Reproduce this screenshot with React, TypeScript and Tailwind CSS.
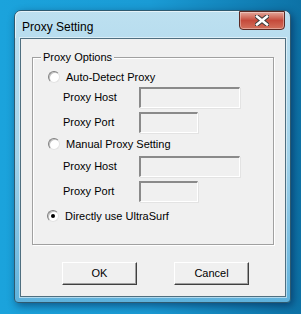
const font = { fontFamily: '"Liberation Sans", Arial, sans-serif' };

function Radio({ checked }: { checked?: boolean }) {
  return (
    <span className="relative inline-flex w-[12px] h-[12px] shrink-0 rounded-full bg-white border border-t-[#808080] border-l-[#808080] border-r-[#e3e3e3] border-b-[#e3e3e3] shadow-[inset_1px_1px_0_#c0c0c0] items-center justify-center">
      {checked && <span className="w-[4px] h-[4px] rounded-full bg-black" />}
    </span>
  );
}

function Field({ width }: { width: string }) {
  return (
    <div
      className={`${width} h-[21px] bg-[#f0f0f0] border-t-2 border-l-2 border-t-[#8a8a8a] border-l-[#8a8a8a] border-r border-b border-r-[#ffffff] border-b-[#ffffff] shadow-[1px_1px_0_#e3e3e3]`}
    />
  );
}

function FieldRow({ label, width, mt }: { label: string; width: string; mt: string }) {
  return (
    <div className={`flex items-center h-[21px] ${mt}`}>
      <span className="w-[76px] pl-[30px] box-content text-[11px] text-black leading-none">{label}</span>
      <Field width={width} />
    </div>
  );
}

function RadioRow({ label, checked, mt, ml }: { label: string; checked?: boolean; mt: string; ml: string }) {
  return (
    <div className={`flex items-center h-[18px] ${mt} ${ml}`}>
      <Radio checked={checked} />
      <span className="ml-[6px] text-[11px] text-black leading-none">{label}</span>
    </div>
  );
}

function Button({ label }: { label: string }) {
  return (
    <button className="w-[75px] h-[23px] bg-[#f0f0f0] border border-t-white border-l-white border-r-[#404040] border-b-[#404040] shadow-[inset_-1px_-1px_0_#a0a0a0] text-[11px] text-black leading-none">
      {label}
    </button>
  );
}

export default function App() {
  return (
    <div
      className="w-[301px] h-[314px] overflow-hidden bg-gradient-to-r from-[#1ba3dc] via-[#1a9bd5] to-[#0d72a6] pt-[10px] pl-[14px]"
      style={font}
    >
      <div className="w-[277px] h-[293px] rounded-t-[7px] rounded-b-[4px] border border-[#2e5a70] bg-gradient-to-b from-[#bde0f0] via-[#a2d2e9] to-[#5fb2dc] shadow-[2px_3px_8px_rgba(0,0,40,0.45)] flex flex-col">
        <div className="relative h-[27px] shrink-0 rounded-t-[6px] border-t border-l border-white/60 flex items-center pl-[6px]">
          <span className="text-[12px] text-black mt-[3px]">Proxy Setting</span>
          <div className="absolute right-[5px] -top-px w-[46px] h-[19px] rounded-b-[4px] border border-[#5a2a24] bg-gradient-to-b from-[#e2a79b] via-[#c54a3b] to-[#d3705c] flex items-center justify-center shadow-[inset_0_0_0_1px_rgba(255,255,255,0.35)]">
            <svg width="14" height="11" viewBox="0 0 14 11">
              <path d="M2 1.5 L12 9.5 M12 1.5 L2 9.5" stroke="#3a3a3a" strokeWidth="4.5" strokeLinecap="square" />
              <path d="M2 1.5 L12 9.5 M12 1.5 L2 9.5" stroke="#ffffff" strokeWidth="2.5" strokeLinecap="square" />
            </svg>
          </div>
        </div>
        <div className="ml-[5px] mr-[4px] h-[259px] bg-[#f0f0f0] border border-[#4f6f80] shadow-[0_0_0_1px_rgba(255,255,255,0.5)]">
          <div className="relative mt-[18px] mx-[11px] h-[188px] border border-[#a0a0a0] shadow-[inset_1px_1px_0_#fff,1px_1px_0_#fff]">
            <span className="absolute -top-[7px] left-[8px] px-[2px] bg-[#f0f0f0] text-[11px] leading-[13px] text-black">
              Proxy Options
            </span>
            <div className="flex flex-col pt-[10px]">
              <RadioRow label="Auto-Detect Proxy" mt="mt-0" ml="ml-[15px]" />
              <FieldRow label="Proxy Host" width="w-[101px]" mt="mt-[1px]" />
              <FieldRow label="Proxy Port" width="w-[59px]" mt="mt-[4px]" />
              <RadioRow label="Manual Proxy Setting" mt="mt-[2px]" ml="ml-[15px]" />
              <FieldRow label="Proxy Host" width="w-[101px]" mt="mt-[3px]" />
              <FieldRow label="Proxy Port" width="w-[59px]" mt="mt-[4px]" />
              <RadioRow label="Directly use UltraSurf" checked mt="mt-[5px]" ml="ml-[14px]" />
            </div>
          </div>
          <div className="flex mt-[17px] pl-[41px] gap-[37px]">
            <Button label="OK" />
            <Button label="Cancel" />
          </div>
        </div>
      </div>
    </div>
  );
}
